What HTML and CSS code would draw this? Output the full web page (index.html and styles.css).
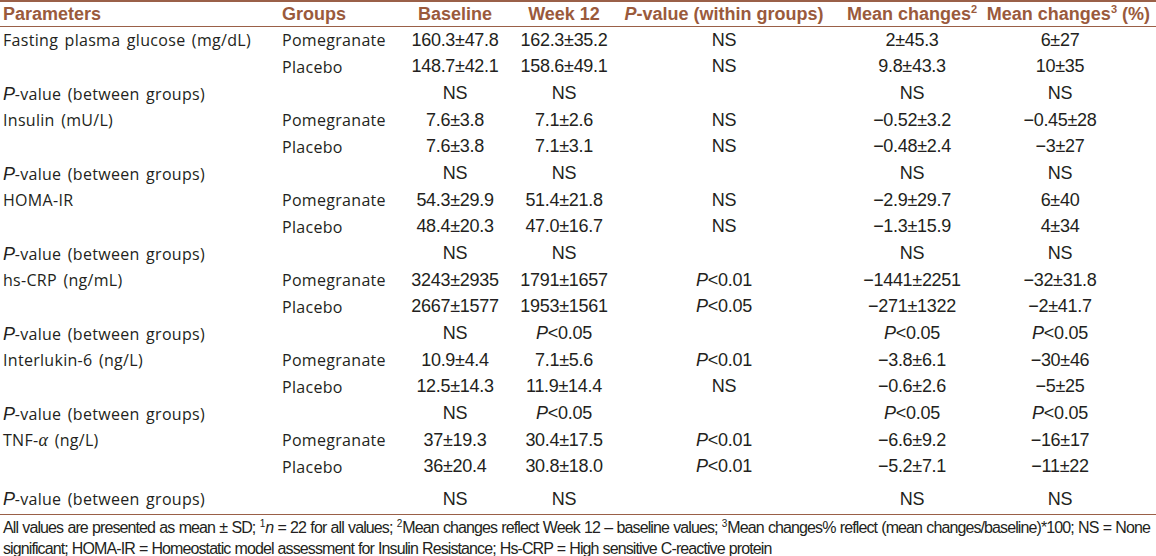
FILE: index.html
```html
<!DOCTYPE html>
<html>
<head>
<meta charset="utf-8">
<link rel="stylesheet" href="styles.css">
</head>
<body>
<table class="tbl">
  <colgroup>
    <col class="c1"><col class="c2"><col class="c3"><col class="c4"><col class="c5"><col class="c6"><col class="c7">
  </colgroup>
  <thead>
    <tr>
      <th class="lbl">Parameters</th>
      <th class="lbl grp">Groups</th>
      <th>Baseline</th>
      <th>Week 12</th>
      <th><i>P</i>-value (within groups)</th>
      <th class="m6">Mean changes<sup>2</sup></th>
      <th class="m7">Mean changes<sup>3</sup> (%)</th>
    </tr>
  </thead>
  <tbody>
    <tr><td class="lbl">Fasting plasma glucose (mg/dL)</td><td class="lbl grp">Pomegranate</td><td>160.3±47.8</td><td>162.3±35.2</td><td>NS</td><td class="m6">2±45.3</td><td class="m7">6±27</td></tr>
    <tr><td class="lbl"></td><td class="lbl grp">Placebo</td><td>148.7±42.1</td><td>158.6±49.1</td><td>NS</td><td class="m6">9.8±43.3</td><td class="m7">10±35</td></tr>
    <tr><td class="lbl"><i>P</i>-value (between groups)</td><td class="lbl grp"></td><td>NS</td><td>NS</td><td></td><td class="m6">NS</td><td class="m7">NS</td></tr>
    <tr><td class="lbl">Insulin (mU/L)</td><td class="lbl grp">Pomegranate</td><td>7.6±3.8</td><td>7.1±2.6</td><td>NS</td><td class="m6">−0.52±3.2</td><td class="m7">−0.45±28</td></tr>
    <tr><td class="lbl"></td><td class="lbl grp">Placebo</td><td>7.6±3.8</td><td>7.1±3.1</td><td>NS</td><td class="m6">−0.48±2.4</td><td class="m7">−3±27</td></tr>
    <tr><td class="lbl"><i>P</i>-value (between groups)</td><td class="lbl grp"></td><td>NS</td><td>NS</td><td></td><td class="m6">NS</td><td class="m7">NS</td></tr>
    <tr><td class="lbl">HOMA-IR</td><td class="lbl grp">Pomegranate</td><td>54.3±29.9</td><td>51.4±21.8</td><td>NS</td><td class="m6">−2.9±29.7</td><td class="m7">6±40</td></tr>
    <tr><td class="lbl"></td><td class="lbl grp">Placebo</td><td>48.4±20.3</td><td>47.0±16.7</td><td>NS</td><td class="m6">−1.3±15.9</td><td class="m7">4±34</td></tr>
    <tr><td class="lbl"><i>P</i>-value (between groups)</td><td class="lbl grp"></td><td>NS</td><td>NS</td><td></td><td class="m6">NS</td><td class="m7">NS</td></tr>
    <tr><td class="lbl">hs-CRP (ng/mL)</td><td class="lbl grp">Pomegranate</td><td>3243±2935</td><td>1791±1657</td><td><i>P</i>&lt;0.01</td><td class="m6">−1441±2251</td><td class="m7">−32±31.8</td></tr>
    <tr><td class="lbl"></td><td class="lbl grp">Placebo</td><td>2667±1577</td><td>1953±1561</td><td><i>P</i>&lt;0.05</td><td class="m6">−271±1322</td><td class="m7">−2±41.7</td></tr>
    <tr><td class="lbl"><i>P</i>-value (between groups)</td><td class="lbl grp"></td><td>NS</td><td><i>P</i>&lt;0.05</td><td></td><td class="m6"><i>P</i>&lt;0.05</td><td class="m7"><i>P</i>&lt;0.05</td></tr>
    <tr><td class="lbl">Interlukin-6 (ng/L)</td><td class="lbl grp">Pomegranate</td><td>10.9±4.4</td><td>7.1±5.6</td><td><i>P</i>&lt;0.01</td><td class="m6">−3.8±6.1</td><td class="m7">−30±46</td></tr>
    <tr><td class="lbl"></td><td class="lbl grp">Placebo</td><td>12.5±14.3</td><td>11.9±14.4</td><td>NS</td><td class="m6">−0.6±2.6</td><td class="m7">−5±25</td></tr>
    <tr><td class="lbl"><i>P</i>-value (between groups)</td><td class="lbl grp"></td><td>NS</td><td><i>P</i>&lt;0.05</td><td></td><td class="m6"><i>P</i>&lt;0.05</td><td class="m7"><i>P</i>&lt;0.05</td></tr>
    <tr><td class="lbl">TNF-<span class="alpha">α</span> (ng/L)</td><td class="lbl grp">Pomegranate</td><td>37±19.3</td><td>30.4±17.5</td><td><i>P</i>&lt;0.01</td><td class="m6">−6.6±9.2</td><td class="m7">−16±17</td></tr>
    <tr><td class="lbl"></td><td class="lbl grp">Placebo</td><td>36±20.4</td><td>30.8±18.0</td><td><i>P</i>&lt;0.01</td><td class="m6">−5.2±7.1</td><td class="m7">−11±22</td></tr>
    <tr class="last"><td class="lbl"><i>P</i>-value (between groups)</td><td class="lbl grp"></td><td>NS</td><td>NS</td><td></td><td class="m6">NS</td><td class="m7">NS</td></tr>
  </tbody>
</table>
<p class="note">All values are presented as mean ± SD; <sup>1</sup><i>n</i> = 22 for all values; <sup>2</sup>Mean changes reflect Week 12 – baseline values; <sup>3</sup>Mean changes% reflect (mean changes/baseline)*100; NS = None significant; HOMA-IR = Homeostatic model assessment for Insulin Resistance; Hs-CRP = High sensitive C-reactive protein</p>
</body>
</html>
```

FILE: styles.css
```css
html, body {
  margin: 0;
  padding: 0;
  background: #ffffff;
}

.tbl {
  width: 1156px;
  border-collapse: collapse;
  table-layout: fixed;
  color: #231f20;
  font-family: "Liberation Sans", Arial, sans-serif;
  font-size: 18px;
  letter-spacing: -0.3px;
}

.c1 { width: 278px; }
.c2 { width: 128px; }
.c3 { width: 98px; }
.c4 { width: 120px; }
.c5 { width: 200px; }
.c6 { width: 162px; }
.c7 { width: 170px; }

.tbl thead tr {
  border-top: 2px solid #9a6048;
  border-bottom: 1px solid #9a6048;
}

.tbl th {
  height: 24px;
  padding: 0;
  font-family: "Liberation Sans", Arial, sans-serif;
  font-weight: bold;
  font-size: 18px;
  letter-spacing: 0;
  color: #9a5a3c;
  text-align: center;
  white-space: nowrap;
  vertical-align: middle;
}

.tbl sup {
  font-size: 11px;
  line-height: 0;
  vertical-align: 7px;
}

.tbl td {
  height: 26.67px;
  padding: 0;
  text-align: center;
  white-space: nowrap;
  vertical-align: middle;
}

.tbl .lbl {
  text-align: left;
  padding-left: 3px;
  font-family: "Open Sans", sans-serif;
  font-size: 16px;
  letter-spacing: 0.3px;
  word-spacing: 2px;
}

.tbl th.lbl {
  font-family: "Liberation Sans", Arial, sans-serif;
  font-size: 18px;
  letter-spacing: 0;
  word-spacing: 0;
}

.tbl td.lbl i {
  font-family: "Liberation Sans", Arial, sans-serif;
  font-size: 18px;
  letter-spacing: -0.3px;
}

.tbl .alpha {
  font-family: "Liberation Serif", serif;
  font-style: italic;
  font-size: 18px;
}

.tbl .grp {
  padding-left: 4px;
  word-spacing: 0;
}

.tbl .m6 {
  padding-left: 14px;
}

.tbl td.m7 {
  padding-right: 22px;
}

.tbl th.m7 {
  text-align: right;
  padding-right: 6px;
}

.tbl tr.last td {
  height: 30px;
  padding-top: 4px;
  border-bottom: 1px solid #9a6048;
}

.note {
  margin: 0;
  padding: 2px 6px 0 3px;
  font-family: "Liberation Sans", Arial, sans-serif;
  font-size: 16px;
  letter-spacing: -0.9px;
  word-spacing: 0.5px;
  line-height: 21px;
  color: #231f20;
  text-align: justify;
}

.note sup {
  font-size: 10px;
  line-height: 0;
  vertical-align: 6px;
  letter-spacing: 0;
}
```
